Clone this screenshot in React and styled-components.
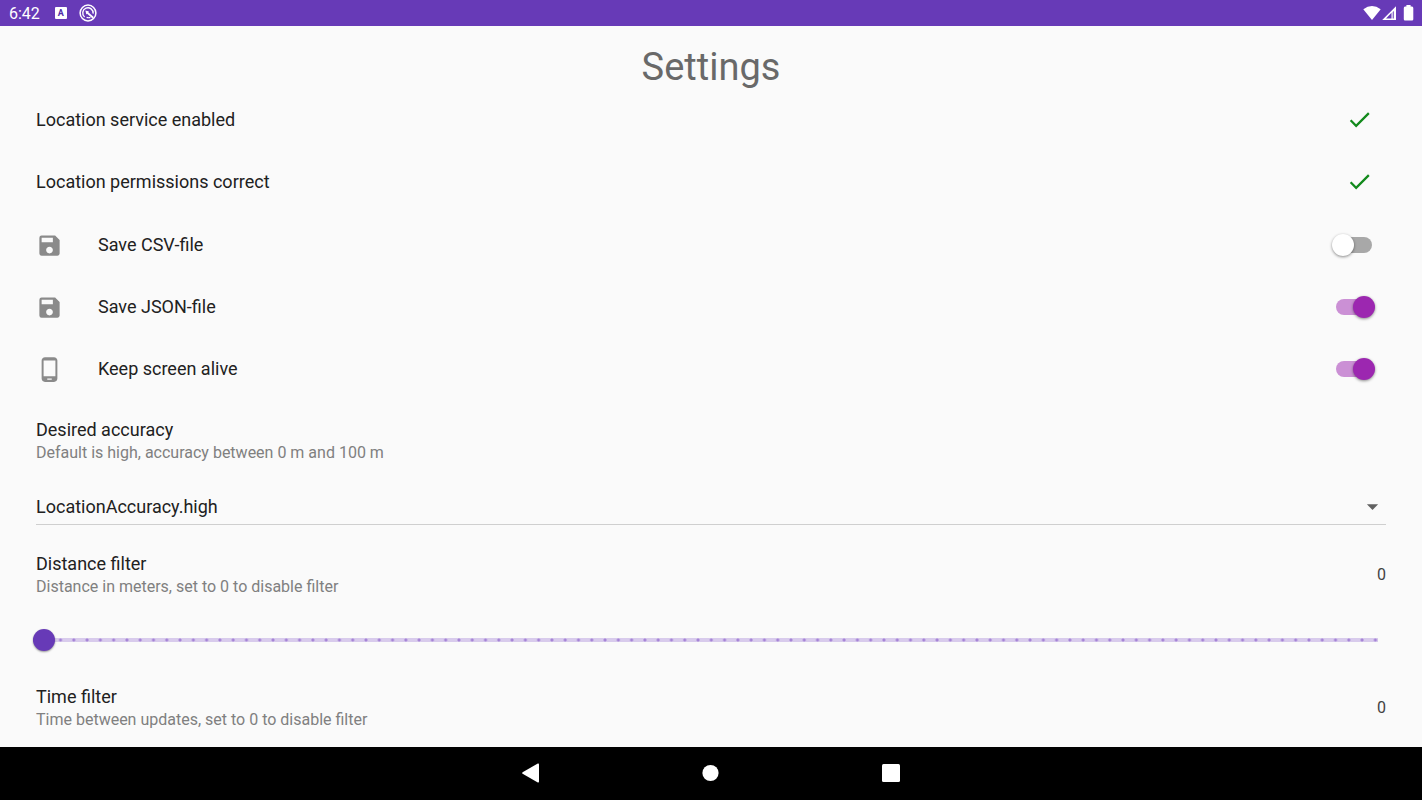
import React, { useState } from "react";
import styled, { createGlobalStyle } from "styled-components";
import { MdCheck, MdSave, MdPhoneAndroid, MdArrowDropDown } from "react-icons/md";

const GlobalStyle = createGlobalStyle`
  *, *::before, *::after { box-sizing: border-box; }
  body {
    margin: 0;
    background: #fafafa;
    color: #212121;
    font-family: Roboto, "Liberation Sans", sans-serif;
  }
`;

const Screen = styled.div`
  display: flex;
  flex-direction: column;
  min-height: 100vh;
`;

const StatusBar = styled.header`
  display: flex;
  align-items: center;
  justify-content: space-between;
  height: 26px;
  padding: 0 8px 0 9px;
  background: #673ab7;
  color: #fff;
  font-size: 16px;
`;

const StatusGroup = styled.div`
  display: flex;
  align-items: center;
  gap: 12px;
`;

const AppBadge = styled.span`
  width: 12px;
  height: 12px;
  margin-left: 3px;
  border-radius: 1px;
  background: #fff;
  color: #512da8;
  font-size: 9px;
  font-weight: 700;
  line-height: 12px;
  text-align: center;
`;

const Content = styled.main`
  flex: 1;
`;

const Title = styled.h1`
  margin: 0;
  padding-top: 17px;
  height: 63px;
  color: #696969;
  font-size: 38px;
  font-weight: 400;
  line-height: 48px;
  text-align: center;
`;

const StatusSection = styled.section`
  padding-bottom: 1px;
`;

const Row = styled.div`
  display: flex;
  align-items: center;
  height: ${({ $tall }) => ($tall ? 80 : 62)}px;
  padding: 0 36px;
`;

const Leading = styled.span`
  display: flex;
  width: 62px;
  color: #8a8a8a;
  font-size: 27px;
`;

const Label = styled.label`
  flex: 1;
  font-size: 18px;
  line-height: 24px;
`;

const TextBlock = styled.div`
  display: flex;
  flex: 1;
  flex-direction: column;
  padding-top: 2px;
`;

const Hint = styled.span`
  color: #808080;
  font-size: 16px;
  line-height: 22px;
`;

const Value = styled.output`
  color: #424242;
  font-size: 16px;
`;

const Trailing = styled.span`
  display: flex;
  justify-content: center;
  width: ${({ $width }) => $width}px;
`;

const CheckMark = styled(MdCheck)`
  height: 27px;
  width: 27px;
  margin-bottom: 2px;
  color: #128a1c;
`;

const Switch = styled.input`
  display: flex;
  align-items: center;
  appearance: none;
  width: 44px;
  height: 24px;
  margin: 0;
  padding: 0 4px;
  cursor: pointer;

  &::before {
    content: "";
    flex: 1;
    height: 16px;
    border-radius: 8px;
    background: #a8a8a8;
  }

  &::after {
    content: "";
    width: 22px;
    height: 22px;
    margin-left: -40px;
    margin-right: 18px;
    border-radius: 50%;
    background: #fff;
    box-shadow: 0 1px 3px rgba(0, 0, 0, 0.45);
  }

  &:checked::before { background: #cb90d5; }
  &:checked::after {
    margin-left: -19px;
    margin-right: -3px;
    background: #9c27b0;
  }
`;

const SelectRow = styled.div`
  display: grid;
  align-items: center;
  height: 45px;
  margin: 0 36px 9px;
  border-bottom: 1px solid #cfcfcf;
`;

const Select = styled.select`
  grid-area: 1 / 1;
  appearance: none;
  width: 100%;
  height: 36px;
  margin-top: 8px;
  padding: 0;
  border: 0;
  background: transparent;
  color: #212121;
  font-family: inherit;
  font-size: 18px;
`;

const Arrow = styled.span`
  grid-area: 1 / 1;
  display: flex;
  justify-self: end;
  margin-top: 8px;
  color: #616161;
  font-size: 27px;
  pointer-events: none;
`;

const SliderRow = styled.div`
  display: flex;
  align-items: center;
  height: 53px;
  padding: 0 44px 2px 33px;
`;

const Slider = styled.input`
  --step: calc((100% - 16px) / 100);
  appearance: none;
  width: 100%;
  height: 22px;
  margin: 0;
  background:
    radial-gradient(circle, #a583d6 1px, transparent 2px) right -4px center / var(--step) 4px repeat-x,
    linear-gradient(#d8cbec, #d8cbec) center / 100% 4px no-repeat;

  &::-webkit-slider-thumb {
    appearance: none;
    width: 22px;
    height: 22px;
    border-radius: 50%;
    background: #673ab7;
    box-shadow: 0 1px 2px rgba(0, 0, 0, 0.4);
  }
`;

const NavBar = styled.nav`
  display: flex;
  justify-content: center;
  gap: 120px;
  height: 53px;
  background: #000;
`;

const NavButton = styled.button`
  display: flex;
  align-items: center;
  justify-content: center;
  width: 60px;
  height: 52px;
  padding: 0;
  border: 0;
  background: transparent;
  color: #fff;
`;

function StatusIcons() {
  return (
    <svg width="51" height="16" viewBox="0 0 51 16" fill="#fff" aria-hidden="true">
      <path d="M0.3 4.3Q9 -2.2 17.7 4.3L9 15Z" />
      <path d="M33 1.2V15H19.2Z" />
      <path d="M28.5 7.8V13.4H23Z" fill="#673ab7" />
      <path d="M31 6V13.4H29.6V7Z" fill="#8d6bcb" />
      <path d="M43.4 1.5V0H47.6V1.5H49Q50.3 1.5 50.3 3V14.2Q50.3 15.5 49 15.5H42Q40.8 15.5 40.8 14.2V3Q40.8 1.5 42 1.5Z" />
    </svg>
  );
}

function SyncOffIcon() {
  return (
    <svg width="18" height="18" viewBox="0 0 18 18" fill="none" stroke="#fff" aria-hidden="true">
      <circle cx="9" cy="9" r="7.9" strokeWidth="1.5" />
      <path d="M5.6 13A5.2 5.2 0 1 1 14.1 9.6" strokeWidth="1.4" />
      <path d="M7.8 8.2L14.2 13.8" strokeWidth="1.8" />
      <path d="M6.4 6.6L10 7.6L7.4 10.4Z" fill="#fff" stroke="none" />
      <path d="M7.6 13.2Q9.6 14.2 11.4 13.4" strokeWidth="1.2" />
    </svg>
  );
}

function StatusRow({ text }) {
  return (
    <Row>
      <Label as="span">{text}</Label>
      <Trailing $width={53}><CheckMark role="img" aria-label="OK" /></Trailing>
    </Row>
  );
}

function SwitchRow({ id, icon: Icon, text, initial }) {
  const [on, setOn] = useState(initial);
  return (
    <Row>
      <Leading><Icon aria-hidden="true" /></Leading>
      <Label htmlFor={id}>{text}</Label>
      <Trailing $width={64}>
        <Switch id={id} type="checkbox" role="switch" checked={on} onChange={(e) => setOn(e.target.checked)} />
      </Trailing>
    </Row>
  );
}

function InfoRow({ id, title, hint, value }) {
  return (
    <Row $tall>
      <TextBlock>
        <Label as={id ? "label" : "span"} htmlFor={id}>{title}</Label>
        <Hint>{hint}</Hint>
      </TextBlock>
      {value !== undefined && <Value>{value}</Value>}
    </Row>
  );
}

export default function App() {
  const [distance, setDistance] = useState(0);
  return (
    <Screen>
      <GlobalStyle />
      <StatusBar>
        <StatusGroup>
          <span>6:42</span>
          <AppBadge>A</AppBadge>
          <SyncOffIcon />
        </StatusGroup>
        <StatusIcons />
      </StatusBar>
      <Content>
        <Title>Settings</Title>
        <StatusSection>
          <StatusRow text="Location service enabled" />
          <StatusRow text="Location permissions correct" />
        </StatusSection>
        <SwitchRow id="csv" icon={MdSave} text="Save CSV-file" initial={false} />
        <SwitchRow id="json" icon={MdSave} text="Save JSON-file" initial />
        <SwitchRow id="awake" icon={MdPhoneAndroid} text="Keep screen alive" initial />
        <InfoRow id="accuracy" title="Desired accuracy" hint="Default is high, accuracy between 0 m and 100 m" />
        <SelectRow>
          <Select id="accuracy" defaultValue="high">
            <option value="high">LocationAccuracy.high</option>
            <option value="low">LocationAccuracy.low</option>
          </Select>
          <Arrow><MdArrowDropDown aria-hidden="true" /></Arrow>
        </SelectRow>
        <InfoRow id="distance" title="Distance filter" hint="Distance in meters, set to 0 to disable filter" value={distance} />
        <SliderRow>
          <Slider id="distance" type="range" min="0" max="100" value={distance} onChange={(e) => setDistance(Number(e.target.value))} />
        </SliderRow>
        <InfoRow title="Time filter" hint="Time between updates, set to 0 to disable filter" value={0} />
      </Content>
      <NavBar>
        <NavButton aria-label="Back">
          <svg width="18" height="20" viewBox="0 0 18 20" fill="currentColor"><path d="M0.6 9.2L15.8 0.6Q17 0.1 17 1.4V18.6Q17 19.9 15.8 19.4L0.6 10.8Q-0.4 10 0.6 9.2Z" /></svg>
        </NavButton>
        <NavButton aria-label="Home">
          <svg width="18" height="18" viewBox="0 0 18 18" fill="currentColor"><circle cx="8.5" cy="9" r="8.1" /></svg>
        </NavButton>
        <NavButton aria-label="Recent apps">
          <svg width="18" height="18" viewBox="0 0 18 18" fill="currentColor"><rect width="18" height="18" rx="1.5" /></svg>
        </NavButton>
      </NavBar>
    </Screen>
  );
}
